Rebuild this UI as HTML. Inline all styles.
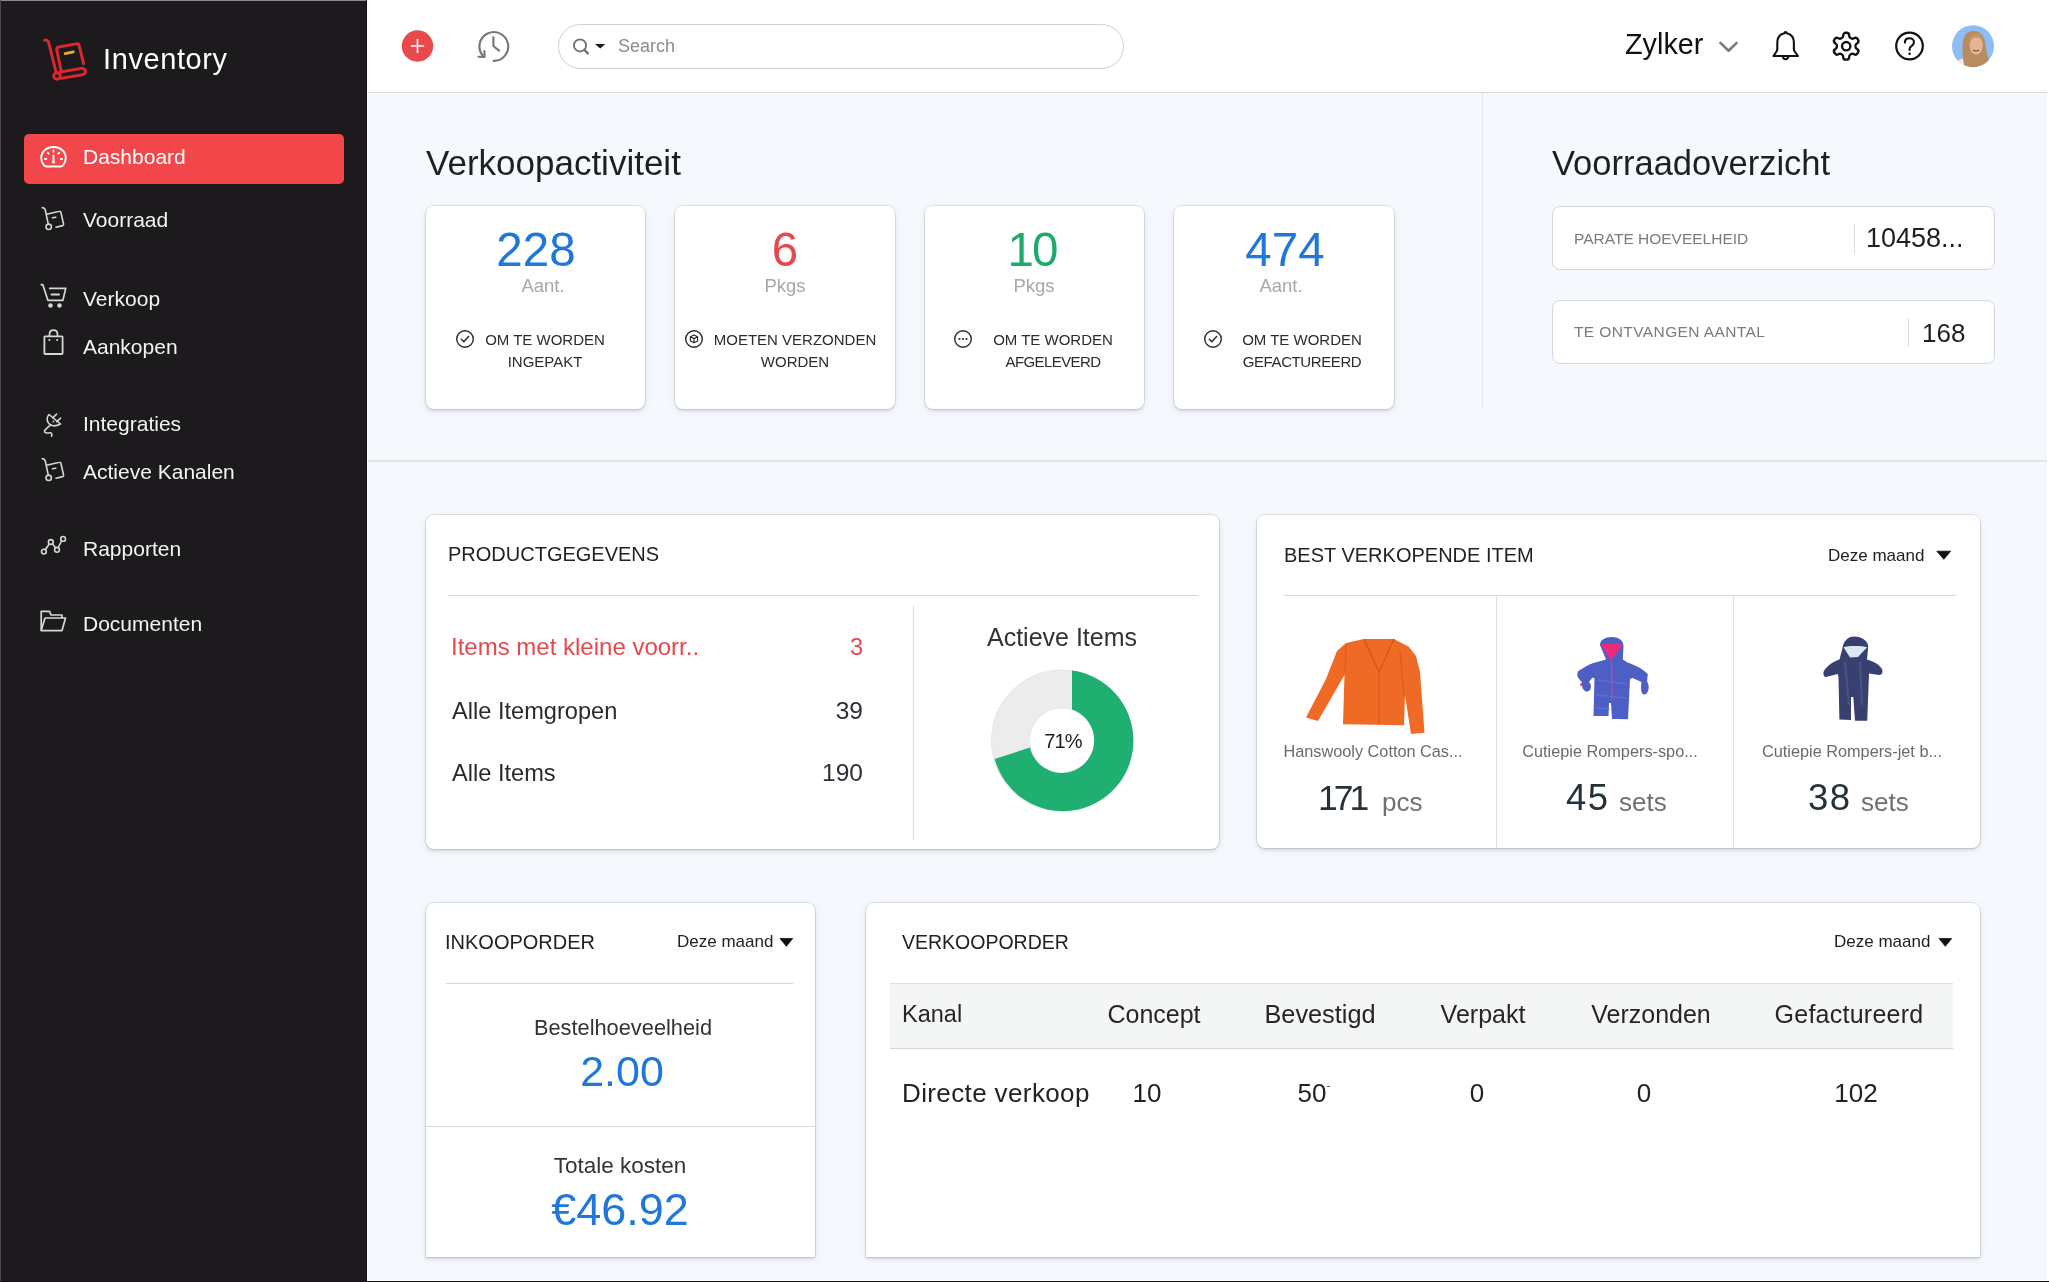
<!DOCTYPE html>
<html><head><meta charset="utf-8"><title>Inventory Dashboard</title>
<style>
html,body{margin:0;padding:0;}
body{width:2049px;height:1282px;position:relative;overflow:hidden;background:#fff;font-family:"Liberation Sans",sans-serif;}
.t{position:absolute;line-height:1;white-space:nowrap;will-change:transform;}
.r{position:absolute;display:block;}
</style></head><body>
<div class="r" style="left:368px;top:93px;width:1679px;height:1187px;background:#f5f8fc;"></div>
<div class="r" style="left:368px;top:0px;width:1679px;height:92px;background:#fff;"></div>
<div class="r" style="left:368px;top:92px;width:1679px;height:1px;background:#d9dbde;"></div>
<div class="r" style="left:0px;top:0px;width:367px;height:1282px;background:#1d1a1d;"></div>
<div class="r" style="left:0px;top:0px;width:367px;height:1px;background:#8e8b8e;"></div>
<div class="r" style="left:0px;top:0px;width:1px;height:1281px;background:#4d4a4d;"></div>
<div class="r" style="left:366px;top:0px;width:1px;height:1282px;background:#120f12;"></div>
<div class="r" style="left:0px;top:1281px;width:2049px;height:1px;background:#141114;"></div>
<div class="r" style="left:367px;top:1280px;width:1682px;height:1px;background:#fff;"></div>
<svg class="r" style="left:40px;top:35px" width="52" height="52" viewBox="0 0 52 52">
<g fill="none" stroke="#e1262b" stroke-width="2.9" stroke-linecap="round" stroke-linejoin="round">
<path d="M4.4 5.1 C6.5 4.9 8.2 5.7 8.7 7.6 L16.2 37.6"/>
<circle cx="17" cy="41" r="3.3"/>
<path d="M21 35.4 L16.8 15 C16.5 13.4 17.3 12.3 18.8 12 L36.3 8.9 C37.9 8.6 38.9 9.4 39.2 10.9 L43.6 28.7"/>
<path d="M20.4 37 L41.6 33.4 C43.5 33.1 45.1 34.3 45.3 36.1 C45.5 38 44.3 39.4 42.3 39.8 L21 43.4"/>
</g>
<path d="M25.2 18.6 L33.4 16.9" stroke="#eaae1f" stroke-width="2.8" stroke-linecap="round"/>
</svg>
<div class="t" style="top:45.25px;font-size:29px;color:#ffffff;letter-spacing:0.6px;left:103.00px;">Inventory</div>
<div class="r" style="left:24px;top:133.5px;width:319.5px;height:50.5px;background:#f1474b;border-radius:5px;"></div>
<svg class="r" style="left:38px;top:144px" width="32" height="28" viewBox="0 0 32 28">
<g fill="none" stroke="#fff" stroke-width="1.9" stroke-linecap="round">
<path d="M6.2 21.5 C3.8 18.8 3.2 16 3.2 14.2 C3.2 7.8 8.2 3 15.5 3 C22.8 3 27.8 7.8 27.8 14.2 C27.8 16 27.2 18.8 24.8 21.5 C24.3 22.2 23.6 22.5 22.8 22.5 L8.2 22.5 C7.4 22.5 6.7 22.2 6.2 21.5 Z"/>
<path d="M15.5 6.5 L15.5 7.8 M9.8 8.8 L10.6 9.7 M21.2 8.8 L20.4 9.7 M7 15 L8.3 15 M24 15 L22.7 15"/>
<path d="M15.5 11.5 L15.5 17.5"/>
</g>
<circle cx="15.5" cy="18" r="1.6" fill="#fff"/>
</svg>
<div class="t" style="top:146.42px;font-size:21px;color:#ffffff;left:83.00px;">Dashboard</div>
<div class="t" style="top:209.32px;font-size:21px;color:#f3f3f3;left:83.00px;">Voorraad</div>
<div class="t" style="top:288.22px;font-size:21px;color:#f3f3f3;left:83.00px;">Verkoop</div>
<div class="t" style="top:336.12px;font-size:21px;color:#f3f3f3;left:83.00px;">Aankopen</div>
<div class="t" style="top:412.92px;font-size:21px;color:#f3f3f3;left:83.00px;">Integraties</div>
<div class="t" style="top:460.82px;font-size:21px;color:#f3f3f3;left:83.00px;">Actieve Kanalen</div>
<div class="t" style="top:537.62px;font-size:21px;color:#f3f3f3;left:83.00px;">Rapporten</div>
<div class="t" style="top:613.32px;font-size:21px;color:#f3f3f3;left:83.00px;">Documenten</div>
<svg class="r" style="left:40px;top:204px" width="28" height="30" viewBox="0 0 28 30"><g fill="none" stroke="#d6d6d6" stroke-width="1.6" stroke-linecap="round" stroke-linejoin="round">
<path d="M2.3 3.6 C3.6 3.8 5 4.6 5.3 6 L8.2 19.8"/>
<circle cx="8.7" cy="22.8" r="2.7"/>
<path d="M6.6 10.2 L19.5 7.3 C20.3 7.1 20.7 7.5 20.9 8.2 L23.6 20.2 C23.8 21 23.4 21.4 22.7 21.6 L16 23.3"/>
<path d="M12.5 13.8 L15.8 13.2"/>
</g></svg>
<svg class="r" style="left:40px;top:455px" width="28" height="30" viewBox="0 0 28 30"><g fill="none" stroke="#d6d6d6" stroke-width="1.6" stroke-linecap="round" stroke-linejoin="round">
<path d="M2.3 3.6 C3.6 3.8 5 4.6 5.3 6 L8.2 19.8"/>
<circle cx="8.7" cy="22.8" r="2.7"/>
<path d="M6.6 10.2 L19.5 7.3 C20.3 7.1 20.7 7.5 20.9 8.2 L23.6 20.2 C23.8 21 23.4 21.4 22.7 21.6 L16 23.3"/>
<path d="M12.5 13.8 L15.8 13.2"/>
</g></svg>
<svg class="r" style="left:38px;top:282px" width="30" height="28" viewBox="0 0 30 28"><g fill="none" stroke="#d6d6d6" stroke-width="1.7" stroke-linecap="round" stroke-linejoin="round">
<path d="M3.3 2.7 L4.8 2.7 L9.9 18.3 L24.9 18.3 L27.7 6.4 L11.7 6.4"/>
<path d="M13.6 12.5 L20.9 12.5" stroke-width="2.2"/>
</g>
<circle cx="12.5" cy="23.5" r="2.3" fill="#d6d6d6"/><circle cx="21.5" cy="23.5" r="2.3" fill="#d6d6d6"/></svg>
<svg class="r" style="left:40px;top:327px" width="28" height="30" viewBox="0 0 28 30"><g fill="none" stroke="#d6d6d6" stroke-width="1.8" stroke-linejoin="round">
<rect x="4.4" y="9.3" width="18.2" height="17.7" rx="0.8"/>
<path d="M9.5 9.3 L9.5 7.5 C9.5 4.9 11.2 3.2 13.5 3.2 C15.8 3.2 17.5 4.9 17.5 7.5 L17.5 9.3"/>
</g>
<circle cx="9.4" cy="13" r="1.1" fill="#d6d6d6"/><circle cx="17.2" cy="13" r="1.1" fill="#d6d6d6"/></svg>
<svg class="r" style="left:38px;top:408px" width="30" height="32" viewBox="0 0 30 32"><g fill="none" stroke="#d6d6d6" stroke-width="1.6" stroke-linecap="round" stroke-linejoin="round">
<path d="M11 6.5 C8.5 9 8.5 13.2 11 15.8 C13.5 18.3 17.8 18.5 22.5 16 Z"/>
<path d="M14.8 9.8 L18.6 6.2 M18.8 13.6 L22.6 10.2"/>
<path d="M13 16.5 C10.5 19 7.2 21.2 6.6 23 C6 25 9.5 25.3 11.5 24.8 C13.2 24.4 14.2 25.5 13.8 27.2 L13.5 28.2"/>
</g>
<circle cx="15.5" cy="13.5" r="0.9" fill="#d6d6d6"/></svg>
<svg class="r" style="left:38px;top:532px" width="30" height="26" viewBox="0 0 30 26"><g fill="none" stroke="#d6d6d6" stroke-width="1.6">
<path d="M7.5 17.5 L11.2 12 M14.2 11.5 L17.3 15.6 M20.5 15 L23.5 9"/>
<circle cx="5.9" cy="19.6" r="2.4"/><circle cx="12.8" cy="10" r="2.4"/><circle cx="19" cy="17.8" r="2.4"/><circle cx="25.1" cy="6.9" r="2.4"/>
</g></svg>
<svg class="r" style="left:38px;top:606px" width="30" height="28" viewBox="0 0 30 28"><g fill="none" stroke="#d6d6d6" stroke-width="1.7" stroke-linejoin="round">
<path d="M3.2 24.6 L3.2 5.4 L11.5 5.4 L13 9 L24 9 L24 12"/>
<path d="M3.2 24.6 L7 12 L27.5 12 L24 24.6 Z"/>
</g></svg>
<svg class="r" style="left:400px;top:29px" width="36" height="36" viewBox="0 0 36 36"><circle cx="17.5" cy="17" r="15.7" fill="#e8494b"/><path d="M10.9 17 L24.2 17 M17.5 10 L17.5 24" stroke="#fff" stroke-width="1.6"/></svg>
<svg class="r" style="left:474px;top:27px" width="40" height="40" viewBox="0 0 40 40"><g fill="none" stroke="#767676" stroke-width="2.1" stroke-linecap="round" stroke-linejoin="round">
<path d="M19.6 33.9 A14.4 14.4 0 1 0 8.6 28.5"/>
<path d="M4.5 29.8 L10.6 29.9 L10.4 24"/>
<path d="M19.4 10.4 L19.4 19 L25 23.6"/>
</g></svg>
<div class="r" style="left:558px;top:23.5px;width:566px;height:45px;box-sizing:border-box;border:1.3px solid #cfd0d1;border-radius:23px;background:#fff;"></div>
<svg class="r" style="left:570px;top:36px" width="22" height="22" viewBox="0 0 22 22"><circle cx="10" cy="9.4" r="6.1" fill="none" stroke="#717171" stroke-width="1.8"/><path d="M14.3 13.8 L17.8 17.4" stroke="#717171" stroke-width="2.3" stroke-linecap="round"/></svg>
<svg class="r" style="left:593px;top:42px" width="14" height="8" viewBox="0 0 14 8"><path d="M2 1.9 L12.3 1.9 L7.2 6.6 Z" fill="#1d1a1e"/></svg>
<div class="t" style="top:37.06px;font-size:18px;color:#8c8c8c;left:617.50px;">Search</div>
<div class="t" style="top:30.32px;font-size:28.8px;color:#111111;left:1624.50px;">Zylker</div>
<svg class="r" style="left:1716px;top:38px" width="26" height="18" viewBox="0 0 26 18"><path d="M4.4 4.9 L12.6 12.7 L20.6 4.9" fill="none" stroke="#7a7a7a" stroke-width="2.6" stroke-linecap="round" stroke-linejoin="round"/></svg>
<svg class="r" style="left:1768px;top:28px" width="36" height="36" viewBox="0 0 36 36"><g fill="none" stroke="#111" stroke-width="2.1" stroke-linejoin="round">
<path d="M5.5 28 L30 28 L26.7 23.5 C26.2 22.8 25.9 21.8 25.9 21 L25.9 15 C25.9 9.5 22.8 6 18.7 5.2 L18.2 4.3 C17.9 3.8 17.2 3.8 16.9 4.3 L16.4 5.2 C12.3 6 9.3 9.5 9.3 15 L9.3 21 C9.3 21.8 9 22.8 8.5 23.5 Z"/>
<path d="M15 28.3 C15 30.3 16.2 31.3 17.6 31.3 C19 31.3 20.2 30.3 20.2 28.3"/>
</g></svg>
<svg class="r" style="left:1830.3px;top:29.8px" width="32.4" height="32.4" viewBox="0 0 24 24"><path d="M12.22 2h-.44a2 2 0 0 0-2 2v.18a2 2 0 0 1-1 1.73l-.43.25a2 2 0 0 1-2 0l-.15-.08a2 2 0 0 0-2.73.73l-.22.38a2 2 0 0 0 .73 2.730l.15.1a2 2 0 0 1 1 1.72v.51a2 2 0 0 1-1 1.74l-.15.09a2 2 0 0 0-.73 2.73l.22.38a2 2 0 0 0 2.73.73l.15-.08a2 2 0 0 1 2 0l.43.25a2 2 0 0 1 1 1.73V20a2 2 0 0 0 2 2h.44a2 2 0 0 0 2-2v-.18a2 2 0 0 1 1-1.73l.43-.25a2 2 0 0 1 2 0l.15.08a2 2 0 0 0 2.730-.73l.22-.39a2 2 0 0 0-.73-2.73l-.15-.08a2 2 0 0 1-1-1.74v-.5a2 2 0 0 1 1-1.74l.15-.09a2 2 0 0 0 .73-2.73l-.22-.38a2 2 0 0 0-2.73-.73l-.15.08a2 2 0 0 1-2 0l-.43-.25a2 2 0 0 1-1-1.73V4a2 2 0 0 0-2-2z" fill="none" stroke="#111" stroke-width="1.75" stroke-linejoin="round"/><circle cx="12" cy="12" r="3.1" fill="none" stroke="#111" stroke-width="1.75"/></svg>
<svg class="r" style="left:1891px;top:28px" width="37" height="37" viewBox="0 0 37 37"><circle cx="18.5" cy="18" r="13.3" fill="none" stroke="#111" stroke-width="2.2"/>
<path d="M13.9 14.6 C13.9 11.7 15.9 10.2 18.5 10.2 C21.1 10.2 23 11.9 23 14.3 C23 16.5 21.6 17.4 20.2 18.3 C19.1 19 18.6 19.7 18.6 21.2 L18.6 22" fill="none" stroke="#111" stroke-width="2.1" stroke-linecap="round"/>
<circle cx="18.6" cy="25.8" r="1.3" fill="#111"/></svg>
<svg class="r" style="left:1951px;top:24px" width="45" height="45" viewBox="0 0 45 45"><defs><clipPath id="av"><circle cx="22" cy="22.2" r="21"/></clipPath></defs>
<g clip-path="url(#av)">
<rect width="45" height="45" fill="#8ebcf4"/>
<path d="M2 40 C6 36 12 34 17 34 L22 45 L2 45 Z" fill="#f4ebe8"/>
<path d="M22.5 7 C29 7 33 11.5 34 18 C35 24 35.5 30 38 36 C39 39 37 43 33 45 L14 45 C13 40 11.5 35 11.5 28 C11.5 20 12 12 16 9 C18 7.5 20 7 22.5 7 Z" fill="#b98b61"/>
<ellipse cx="25.2" cy="21.5" rx="6.6" ry="9.3" fill="#e3b593"/>
<path d="M17 17 C18 12 21 9.5 25 9.5 C29 9.5 31.5 12 32 16 C29 13.5 25 12.5 20 14.5 Z" fill="#c39468"/>
<path d="M22 25.8 C23.5 27.3 26.5 27.3 28 25.8" stroke="#6a4a3a" stroke-width="1.1" fill="none"/>
</g></svg>
<div class="t" style="top:145.17px;font-size:35px;color:#1f1f1f;left:426.00px;">Verkoopactiviteit</div>
<div class="r" style="left:425.5px;top:205.5px;width:219.5px;height:203.5px;background:#fff;border-radius:8px;box-shadow:0 0 0 1px rgba(0,0,0,0.08),0 2px 3px rgba(20,30,50,0.10),0 2px 8px rgba(20,30,50,0.08);"></div>
<div class="t" style="top:225.99px;font-size:47.5px;color:#1f77d9;left:-64.00px;width:1200px;text-align:center;">228</div>
<div class="t" style="top:277.24px;font-size:18.5px;color:#a8a8a8;left:-57.00px;width:1200px;text-align:center;">Aant.</div>
<div class="t" style="top:332.10px;font-size:15px;color:#2b2b2b;left:-55.00px;width:1200px;text-align:center;">OM TE WORDEN</div>
<div class="t" style="top:354.00px;font-size:15px;color:#2b2b2b;left:-55.00px;width:1200px;text-align:center;">INGEPAKT</div>
<svg class="r" style="left:455.0px;top:329px" width="20" height="20" viewBox="0 0 20 20"><circle cx="10" cy="10" r="8.3" fill="none" stroke="#2b2b2b" stroke-width="1.4"/><path d="M6.3 10.3 L8.8 12.7 L13.6 7.6" fill="none" stroke="#2b2b2b" stroke-width="1.5" stroke-linecap="round" stroke-linejoin="round"/></svg>
<div class="r" style="left:675.0px;top:205.5px;width:219.5px;height:203.5px;background:#fff;border-radius:8px;box-shadow:0 0 0 1px rgba(0,0,0,0.08),0 2px 3px rgba(20,30,50,0.10),0 2px 8px rgba(20,30,50,0.08);"></div>
<div class="t" style="top:225.99px;font-size:47.5px;color:#e8474c;left:184.70px;width:1200px;text-align:center;">6</div>
<div class="t" style="top:277.24px;font-size:18.5px;color:#a8a8a8;left:185.00px;width:1200px;text-align:center;">Pkgs</div>
<div class="t" style="top:332.10px;font-size:15px;color:#2b2b2b;left:194.90px;width:1200px;text-align:center;">MOETEN VERZONDEN</div>
<div class="t" style="top:354.00px;font-size:15px;color:#2b2b2b;left:194.90px;width:1200px;text-align:center;">WORDEN</div>
<svg class="r" style="left:683.9px;top:329px" width="20" height="20" viewBox="0 0 20 20"><circle cx="10" cy="10" r="8.3" fill="none" stroke="#2b2b2b" stroke-width="1.4"/><path d="M10 6 L13.6 7.8 L13.6 12 L10 13.8 L6.4 12 L6.4 7.8 Z M6.4 7.8 L10 9.6 L13.6 7.8 M10 9.6 L10 13.8" fill="none" stroke="#2b2b2b" stroke-width="1.2" stroke-linejoin="round"/></svg>
<div class="r" style="left:924.5px;top:205.5px;width:219.5px;height:203.5px;background:#fff;border-radius:8px;box-shadow:0 0 0 1px rgba(0,0,0,0.08),0 2px 3px rgba(20,30,50,0.10),0 2px 8px rgba(20,30,50,0.08);"></div>
<div class="t" style="top:225.99px;font-size:47.5px;color:#1faa6b;letter-spacing:-2px;left:433.20px;width:1200px;text-align:center;text-indent:-2px;">10</div>
<div class="t" style="top:277.24px;font-size:18.5px;color:#a8a8a8;left:433.50px;width:1200px;text-align:center;">Pkgs</div>
<div class="t" style="top:332.10px;font-size:15px;color:#2b2b2b;left:452.50px;width:1200px;text-align:center;">OM TE WORDEN</div>
<div class="t" style="top:354.00px;font-size:15px;color:#2b2b2b;letter-spacing:-0.6px;left:452.50px;width:1200px;text-align:center;">AFGELEVERD</div>
<svg class="r" style="left:953.0px;top:329px" width="20" height="20" viewBox="0 0 20 20"><circle cx="10" cy="10" r="8.3" fill="none" stroke="#2b2b2b" stroke-width="1.4"/><circle cx="6.5" cy="10" r="1.1" fill="#2b2b2b"/><circle cx="10" cy="10" r="1.1" fill="#2b2b2b"/><circle cx="13.5" cy="10" r="1.1" fill="#2b2b2b"/></svg>
<div class="r" style="left:1174.0px;top:205.5px;width:219.5px;height:203.5px;background:#fff;border-radius:8px;box-shadow:0 0 0 1px rgba(0,0,0,0.08),0 2px 3px rgba(20,30,50,0.10),0 2px 8px rgba(20,30,50,0.08);"></div>
<div class="t" style="top:225.99px;font-size:47.5px;color:#1f77d9;left:685.20px;width:1200px;text-align:center;">474</div>
<div class="t" style="top:277.24px;font-size:18.5px;color:#a8a8a8;left:681.00px;width:1200px;text-align:center;">Aant.</div>
<div class="t" style="top:332.10px;font-size:15px;color:#2b2b2b;left:702.20px;width:1200px;text-align:center;">OM TE WORDEN</div>
<div class="t" style="top:354.00px;font-size:15px;color:#2b2b2b;letter-spacing:-0.4px;left:702.20px;width:1200px;text-align:center;">GEFACTUREERD</div>
<svg class="r" style="left:1203.2px;top:329px" width="20" height="20" viewBox="0 0 20 20"><circle cx="10" cy="10" r="8.3" fill="none" stroke="#2b2b2b" stroke-width="1.4"/><path d="M6.3 10.3 L8.8 12.7 L13.6 7.6" fill="none" stroke="#2b2b2b" stroke-width="1.5" stroke-linecap="round" stroke-linejoin="round"/></svg>
<div class="r" style="left:1482px;top:93px;width:1.2px;height:316px;background:#e3e6ea;"></div>
<div class="t" style="top:146.00px;font-size:34.5px;color:#1f1f1f;left:1552.00px;">Voorraadoverzicht</div>
<div class="r" style="left:1552px;top:206.2px;width:443px;height:64.3px;box-sizing:border-box;background:#fff;border:1.2px solid #d3d5d8;border-radius:8px;"></div>
<div class="t" style="top:231.08px;font-size:15.5px;color:#7b7b7b;left:1573.80px;">PARATE HOEVEELHEID</div>
<div class="r" style="left:1853.5px;top:224px;width:1.2px;height:29.5px;background:#dcdcdc;"></div>
<div class="t" style="top:225.34px;font-size:27px;color:#1f1f1f;left:1866.00px;">10458...</div>
<div class="r" style="left:1552px;top:299.8px;width:443px;height:64px;box-sizing:border-box;background:#fff;border:1.2px solid #d3d5d8;border-radius:8px;"></div>
<div class="t" style="top:324.48px;font-size:15.5px;color:#7b7b7b;letter-spacing:0.4px;left:1573.80px;">TE ONTVANGEN AANTAL</div>
<div class="r" style="left:1908.2px;top:317.5px;width:1.2px;height:29.5px;background:#dcdcdc;"></div>
<div class="t" style="top:319.59px;font-size:26px;color:#1f1f1f;left:1922.00px;">168</div>
<div class="r" style="left:368px;top:460px;width:1679px;height:1.5px;background:#e4e5e7;"></div>
<div class="r" style="left:426px;top:515px;width:792.5px;height:333.5px;background:#fff;border-radius:8px;box-shadow:0 0 0 1px rgba(0,0,0,0.09),0 2px 3px rgba(20,30,50,0.10),0 2px 8px rgba(20,30,50,0.08);"></div>
<div class="t" style="top:543.87px;font-size:20px;color:#222222;left:448.00px;">PRODUCTGEGEVENS</div>
<div class="r" style="left:448px;top:594.8px;width:749.5px;height:1.2px;background:#d6d7d9;"></div>
<div class="r" style="left:913px;top:605px;width:1.2px;height:234.5px;background:#dcdddf;"></div>
<div class="t" style="top:635.48px;font-size:24px;color:#e6484d;left:450.50px;">Items met kleine voorr..</div>
<div class="t" style="top:635.82px;font-size:23.6px;color:#e6484d;left:-337.20px;width:1200px;text-align:right;">3</div>
<div class="t" style="top:699.82px;font-size:23.6px;color:#2a2a2a;left:451.50px;">Alle Itemgropen</div>
<div class="t" style="top:699.06px;font-size:24.5px;color:#2b3136;left:-337.20px;width:1200px;text-align:right;">39</div>
<div class="t" style="top:761.52px;font-size:23.6px;color:#2a2a2a;left:451.50px;">Alle Items</div>
<div class="t" style="top:760.76px;font-size:24.5px;color:#2b3136;left:-337.20px;width:1200px;text-align:right;">190</div>
<div class="t" style="top:624.64px;font-size:25px;color:#333333;left:462.00px;width:1200px;text-align:center;">Actieve Items</div>
<svg class="r" style="left:980px;top:660px" width="164" height="164" viewBox="0 0 164 164"><g transform="translate(-980,-660)">
<circle cx="1062" cy="740.5" r="51.55" fill="none" stroke="#ececec" stroke-width="38.1"/>
<circle cx="1062" cy="740.5" r="70.6" fill="none" stroke="#cde9dc" stroke-width="0.6"/>
<circle cx="1062" cy="740.5" r="32.5" fill="none" stroke="#cde9dc" stroke-width="0.6"/>
<path d="M1072 670.6 A70.6 70.6 0 1 1 994.7 759 L1030 747.6 A32.5 32.5 0 1 0 1072 709.6 Z" fill="#1fb071"/>
</g></svg>
<div class="t" style="top:730.97px;font-size:20px;color:#1f1f1f;letter-spacing:-0.8px;left:462.50px;width:1200px;text-align:center;">71%</div>
<div class="r" style="left:1257px;top:515px;width:723px;height:333px;background:#fff;border-radius:8px;box-shadow:0 0 0 1px rgba(0,0,0,0.09),0 2px 3px rgba(20,30,50,0.10),0 2px 8px rgba(20,30,50,0.08);"></div>
<div class="t" style="top:544.57px;font-size:20px;color:#222222;left:1283.50px;">BEST VERKOPENDE ITEM</div>
<div class="t" style="top:546.71px;font-size:17px;color:#222222;left:1828.00px;">Deze maand</div>
<svg class="r" style="left:1934px;top:549px" width="18" height="12" viewBox="0 0 18 12"><path d="M2.8 2.2 L16.7 2.2 L9.75 10.3 Z" fill="#111" stroke="#111" stroke-width="0.8" stroke-linejoin="round"/></svg>
<div class="r" style="left:1284px;top:594.8px;width:672px;height:1.2px;background:#d6d7d9;"></div>
<div class="r" style="left:1496.3px;top:596px;width:1.2px;height:251.5px;background:#dcdddf;"></div>
<div class="r" style="left:1733.2px;top:596px;width:1.2px;height:251.5px;background:#dcdddf;"></div>
<svg class="r" style="left:1295px;top:630px" width="140" height="110" viewBox="0 0 140 110"><g transform="translate(-1295,-630)">
<path d="M1364 639 L1394 639 L1409 647 L1416 656 L1420 672 L1424.5 732.8 L1411 734 L1405 695 L1404 725.2 L1343 724.2 L1344.5 675 L1318 721 L1306 717.5 L1326 679 L1337 651 L1346 643 Z" fill="#ef6b25"/>
<path d="M1364 639 L1379 672 L1394 639" fill="none" stroke="#d45a1c" stroke-width="1.6"/>
<path d="M1346 645 L1345 671 M1400 652 L1404 695" fill="none" stroke="#d8561a" stroke-width="1.6" opacity="0.7"/>
<path d="M1379 672 L1379 724" stroke="#d45a1c" stroke-width="1.2"/>
<path d="M1350 690 L1400 690" stroke="#f27a38" stroke-width="0" />
</g></svg>
<svg class="r" style="left:1570px;top:630px" width="85" height="95" viewBox="0 0 85 95"><g transform="translate(-1570,-630)">
<path d="M1611.7 637 C1618 637 1623.5 640 1623.5 646 L1622.8 659.5 L1627.5 662.5 C1635 665 1643 669 1647.8 674 L1647 681 L1648.5 685 C1649.5 690 1647 695 1644 694.5 C1641 694 1640.5 688 1641.5 682 L1632.5 678 L1630 679 L1628 719.3 L1612 719 L1611 703 L1609 703 L1608.5 716 L1593.5 716 L1594.5 678.5 L1592.5 677.5 L1589 682 C1591.5 684 1592 690 1588 691.5 C1584 692.5 1581 687 1582 682.5 L1578 677.5 C1576.5 674 1577.5 671 1580 670 C1586 666 1592 663 1598 661.8 L1606 659.5 L1600 645 C1600 640 1605 637 1611.7 637 Z" fill="#4d5ec4"/>
<path d="M1601 645 C1604 643 1618 643 1622.5 645 L1611 660.5 Z" fill="#ec2a7b"/>
<path d="M1611.7 661 L1611.7 700" stroke="#e03a8e" stroke-width="1.3"/>
<path d="M1597 680 L1627 684 M1596 695 L1627 698 M1596 708 L1610 709" stroke="#6b77d8" stroke-width="1.5" opacity="0.6"/>
<circle cx="1581.5" cy="684.5" r="1.5" fill="#e03a7a"/>
</g></svg>
<svg class="r" style="left:1815px;top:630px" width="75" height="95" viewBox="0 0 75 95"><g transform="translate(-1815,-630)">
<path d="M1854.1 636.5 C1862 636.5 1868 641 1868.2 646.5 L1867 659.4 C1873 661 1879 664 1882 669 C1883 672 1882.5 675 1879 675 L1869 673.5 L1868.9 677 L1867.2 720.8 L1855 720.8 L1853.3 697 L1851 697 L1851 720 L1839.4 719.5 L1838.5 677 L1837.8 674.1 L1826 677 C1823 677 1822.8 672 1824.5 670 C1828 665 1834 661 1839.5 659.4 L1842.5 648 C1843.5 641 1848 636.5 1854.1 636.5 Z" fill="#37406f"/>
<path d="M1843.5 647.2 C1848 645.5 1862 645.5 1867.2 647.2 L1858 657 L1850 657.5 Z" fill="#dbe7f7"/>
<path d="M1845 662 L1849 705 M1860 662 L1862 705" stroke="#5663a0" stroke-width="2" opacity="0.55"/>
</g></svg>
<div class="t" style="top:743.40px;font-size:16.3px;color:#6b6b6b;left:773.00px;width:1200px;text-align:center;">Hanswooly Cotton Cas...</div>
<div class="t" style="top:743.40px;font-size:16.3px;color:#6b6b6b;left:1010.20px;width:1200px;text-align:center;">Cutiepie Rompers-spo...</div>
<div class="t" style="top:743.40px;font-size:16.3px;color:#6b6b6b;left:1251.70px;width:1200px;text-align:center;">Cutiepie Rompers-jet b...</div>
<div class="t" style="top:780.75px;font-size:35.5px;color:#263238;letter-spacing:-4px;left:1318.40px;">171</div>
<div class="t" style="top:788.79px;font-size:26px;color:#707070;left:1382.00px;">pcs</div>
<div class="t" style="top:779.90px;font-size:36.5px;color:#263238;letter-spacing:1.5px;left:1566.10px;">45</div>
<div class="t" style="top:788.79px;font-size:26px;color:#707070;left:1619.00px;">sets</div>
<div class="t" style="top:779.90px;font-size:36.5px;color:#263238;letter-spacing:1.5px;left:1807.90px;">38</div>
<div class="t" style="top:788.79px;font-size:26px;color:#707070;left:1861.00px;">sets</div>
<div class="r" style="left:426px;top:902.5px;width:388.5px;height:354.5px;background:#fff;border-radius:8px;box-shadow:0 0 0 1px rgba(0,0,0,0.09),0 2px 3px rgba(20,30,50,0.10),0 2px 8px rgba(20,30,50,0.08);border-radius:8px 8px 0 0;"></div>
<div class="t" style="top:932.07px;font-size:20px;color:#222222;left:445.00px;">INKOOPORDER</div>
<div class="t" style="top:932.91px;font-size:17px;color:#222222;left:677.00px;">Deze maand</div>
<svg class="r" style="left:777px;top:936px" width="18" height="12" viewBox="0 0 18 12"><path d="M3 2.5 L15.7 2.5 L9.35 10.3 Z" fill="#111" stroke="#111" stroke-width="0.8" stroke-linejoin="round"/></svg>
<div class="r" style="left:446px;top:982.8px;width:347px;height:1.2px;background:#d6d7d9;"></div>
<div class="r" style="left:426px;top:1125.5px;width:388.5px;height:1.2px;background:#d9dadc;"></div>
<div class="t" style="top:1016.75px;font-size:21.8px;color:#333333;left:23.20px;width:1200px;text-align:center;">Bestelhoeveelheid</div>
<div class="t" style="top:1050.20px;font-size:43px;color:#1f77d9;left:22.00px;width:1200px;text-align:center;">2.00</div>
<div class="t" style="top:1155.25px;font-size:22.5px;color:#333333;left:20.20px;width:1200px;text-align:center;">Totale kosten</div>
<div class="t" style="top:1186.61px;font-size:45px;color:#1f77d9;left:19.70px;width:1200px;text-align:center;">€46.92</div>
<div class="r" style="left:866px;top:902.5px;width:1114px;height:354.5px;background:#fff;border-radius:8px;box-shadow:0 0 0 1px rgba(0,0,0,0.09),0 2px 3px rgba(20,30,50,0.10),0 2px 8px rgba(20,30,50,0.08);border-radius:8px 8px 0 0;"></div>
<div class="t" style="top:932.89px;font-size:19.5px;color:#222222;left:901.50px;">VERKOOPORDER</div>
<div class="t" style="top:932.91px;font-size:17px;color:#222222;left:1833.50px;">Deze maand</div>
<svg class="r" style="left:1936px;top:936px" width="18" height="12" viewBox="0 0 18 12"><path d="M3 2.5 L15.7 2.5 L9.35 10.3 Z" fill="#111" stroke="#111" stroke-width="0.8" stroke-linejoin="round"/></svg>
<div class="r" style="left:890px;top:983px;width:1062.7px;height:65.5px;background:#f4f5f5;border-top:1.2px solid #dfe0e1;border-bottom:1.5px solid #d5d6d8;box-sizing:border-box;"></div>
<div class="t" style="top:1003.41px;font-size:23.5px;color:#262626;left:901.50px;">Kanal</div>
<div class="t" style="top:1002.14px;font-size:25px;color:#262626;left:553.80px;width:1200px;text-align:center;">Concept</div>
<div class="t" style="top:1001.88px;font-size:25.3px;color:#262626;left:720.10px;width:1200px;text-align:center;">Bevestigd</div>
<div class="t" style="top:1002.14px;font-size:25px;color:#262626;left:882.80px;width:1200px;text-align:center;">Verpakt</div>
<div class="t" style="top:1002.14px;font-size:25px;color:#262626;left:1050.60px;width:1200px;text-align:center;">Verzonden</div>
<div class="t" style="top:1002.14px;font-size:25px;color:#262626;letter-spacing:0.25px;left:1249.00px;width:1200px;text-align:center;">Gefactureerd</div>
<div class="t" style="top:1080.49px;font-size:26px;color:#222222;letter-spacing:0.38px;left:901.50px;">Directe verkoop</div>
<div class="t" style="top:1080.49px;font-size:26px;color:#222222;left:547.20px;width:1200px;text-align:center;">10</div>
<div class="t" style="top:1080.49px;font-size:26px;color:#222222;left:712.00px;width:1200px;text-align:center;">50</div>
<div class="t" style="top:1080.49px;font-size:26px;color:#222222;left:876.50px;width:1200px;text-align:center;">0</div>
<div class="t" style="top:1080.49px;font-size:26px;color:#222222;left:1044.00px;width:1200px;text-align:center;">0</div>
<div class="t" style="top:1080.49px;font-size:26px;color:#222222;left:1255.60px;width:1200px;text-align:center;">102</div>
<div class="r" style="left:1327px;top:1085.5px;width:2.5px;height:1px;background:#555;"></div>
</body></html>
